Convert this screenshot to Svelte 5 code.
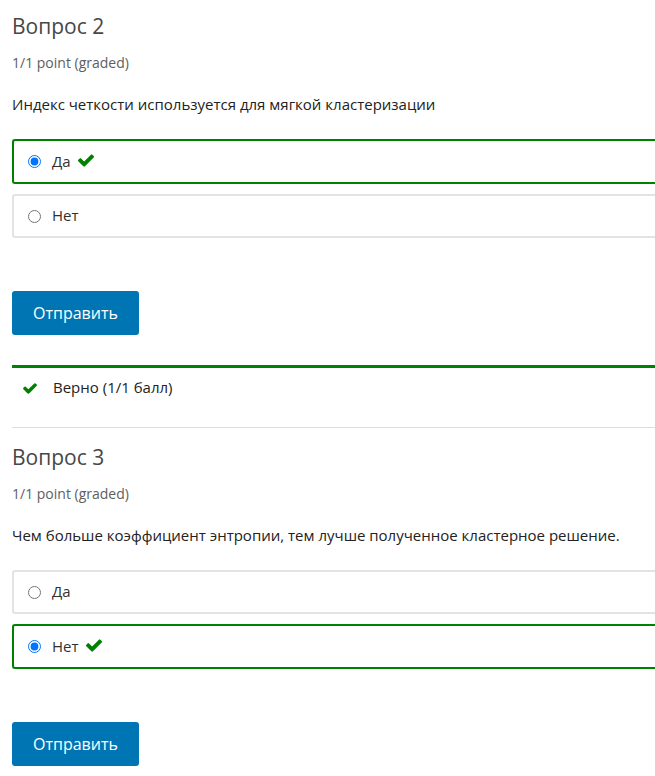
<script>
  let questions = $state([
    {
      id: 'q2',
      title: 'Вопрос 2',
      text: 'Индекс четкости используется для мягкой кластеризации',
      options: ['Да', 'Нет'],
      correct: 'Да',
      picked: 'Да',
      notice: 'Верно (1/1 балл)'
    },
    {
      id: 'q3',
      title: 'Вопрос 3',
      text: 'Чем больше коэффициент энтропии, тем лучше полученное кластерное решение.',
      options: ['Да', 'Нет'],
      correct: 'Нет',
      picked: 'Нет',
      notice: ''
    }
  ]);
</script>

{#snippet check()}
  <svg class="check" viewBox="121 334 1550 1188" aria-hidden="true">
    <path d="M1671 566q0 40-28 68l-724 724-136 136q-28 28-68 28t-68-28l-136-136-362-362q-28-28-28-68t28-68l136-136q28-28 68-28t68 28l294 295 656-657q28-28 68-28t68 28l136 136q28 28 28 68z" />
  </svg>
{/snippet}

<main>
  {#each questions as q (q.id)}
    <section>
      <h3>{q.title}</h3>
      <p class="progress">1/1 point (graded)</p>
      <p class="text" id="{q.id}-text">{q.text}</p>
      <div class="options" role="radiogroup" aria-labelledby="{q.id}-text">
        {#each q.options as option}
          <label class:correct={q.picked === option && q.correct === option}>
            <input type="radio" name={q.id} value={option} bind:group={q.picked} />
            <span class="answer">
              {option}
              {#if q.picked === option && q.correct === option}{@render check()}{/if}
            </span>
          </label>
        {/each}
      </div>
      <button type="button">Отправить</button>
      {#if q.notice}
        <div class="notice">
          {@render check()}
          <span>{q.notice}</span>
        </div>
      {/if}
    </section>
  {/each}
</main>

<style>
  :global(body) {
    background: #fff;
  }
  main {
    padding-left: 12px;
    overflow: hidden;
    font-family: 'Open Sans', 'Noto Sans', sans-serif;
    font-size: 15px;
    line-height: 24px;
    color: #222;
  }
  section {
    padding: 12px 0 10px;
  }
  section + section {
    border-top: 1px solid #ddd;
    padding-top: 15px;
  }
  h3 {
    margin: 0;
    font-size: 21px;
    line-height: 28px;
    font-weight: 400;
    color: #474747;
  }
  p {
    margin: 0;
  }
  .progress {
    margin-top: 12px;
    font-size: 14px;
    line-height: 22px;
    color: #5e5e5e;
  }
  .text {
    margin-top: 18px;
  }
  .options {
    display: flex;
    flex-direction: column;
    gap: 10px;
    margin-top: 23px;
  }
  label {
    display: flex;
    align-items: center;
    box-sizing: border-box;
    min-height: 44px;
    padding: 8px 14px;
    border: 2px solid #e3e3e3;
    border-right: 0;
    border-radius: 3px 0 0 3px;
    color: #313131;
  }
  label.correct {
    min-height: 45px;
    border-color: #008100;
  }
  input {
    width: 13px;
    height: 13px;
    margin: 0 11px 0 0;
  }
  .answer {
    display: flex;
    align-items: center;
    gap: 7px;
    padding-bottom: 2px;
    line-height: 22px;
  }
  .check {
    width: 16px;
    height: 13px;
    fill: #008100;
  }
  button {
    display: block;
    margin-top: 53px;
    min-height: 44px;
    padding: 0 21px;
    border: 0;
    border-radius: 3px;
    background: #0075b4;
    color: #fff;
    font: inherit;
    font-size: 16px;
  }
  .notice {
    display: flex;
    align-items: center;
    gap: 16px;
    margin-top: 30px;
    padding: 8px 11px 17px;
    border-top: 3px solid #008100;
  }
  .notice span {
    padding-bottom: 2px;
    line-height: 22px;
  }
  .notice .check {
    width: 14px;
    height: 11px;
  }
</style>
